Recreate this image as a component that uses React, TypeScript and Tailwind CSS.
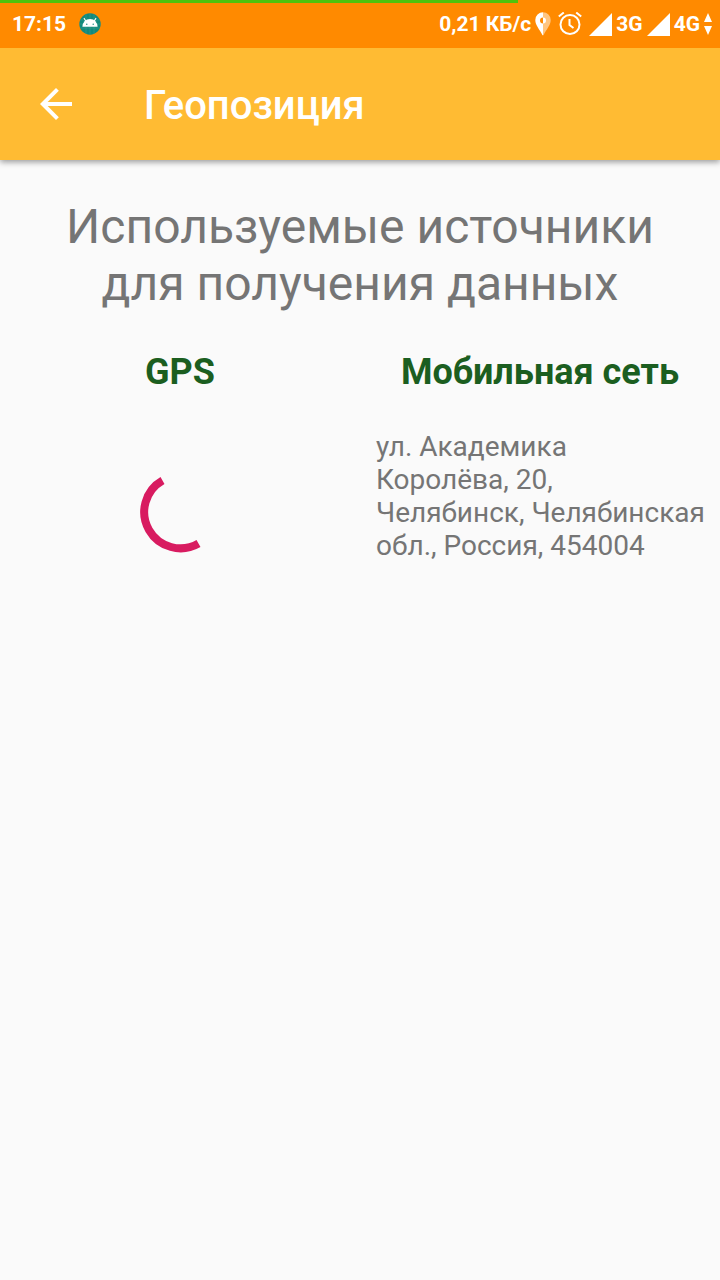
function AndroidBadge() {
  return (
    <svg viewBox="0 0 22 22" className="size-[22px]" aria-hidden="true">
      <circle cx="11" cy="11" r="10.7" fill="#12897b" />
      <path d="M7 1v20M11 0v22M15 1v20M1 7h20M0 11h22M1 15h20" stroke="#3f9f93" strokeWidth=".5" />
      <path d="M3.4 13.8a7.6 7.8 0 0 1 15.2 0z" fill="#fff" />
      <path d="M6.9 8.2 5.2 5.5M15.1 8.2 16.8 5.5" stroke="#fff" strokeWidth="1.2" strokeLinecap="round" />
      <circle cx="7.8" cy="11.2" r=".7" fill="#12897b" />
      <circle cx="14.2" cy="11.2" r=".7" fill="#12897b" />
    </svg>
  );
}

function PinIcon() {
  return (
    <svg viewBox="0 0 16 24" className="h-6 w-4" aria-hidden="true">
      <path d="M8 .3A7.700 7.700 0 0 1 15.700 8C15.700 13.500 11.500 17 8.500 23.300H8z" fill="#fff" fillOpacity=".5" />
      <path d="M8 .3A7.700 7.700 0 0 0 .3 8C.3 13.500 4.500 17 7.500 23.300H8z" fill="#fff" />
      <path d="M8 5.500a3 3 0 0 0 0 6z" fill="#ff8a00" />
      <path d="M8 5.500a3 3 0 0 1 0 6z" fill="#fff" />
    </svg>
  );
}

function AlarmIcon() {
  return (
    <svg viewBox="0 0 24 24" className="size-6" fill="none" stroke="#fff" strokeWidth="2" aria-hidden="true">
      <circle cx="12" cy="12.500" r="9.500" />
      <path d="M11.500 7v6l4 3M.8 4.500l5-4M23.200 4.500l-5-4" />
    </svg>
  );
}

function SignalIcon() {
  return (
    <svg viewBox="0 0 23 23" className="size-[23px]" fill="#fff" aria-hidden="true">
      <path d="M23 0v23H0z" />
    </svg>
  );
}

function StatusBar() {
  return (
    <div className="relative z-10 bg-[#ff8a00] text-[21px] leading-6 font-bold text-white">
      <div className="h-[3px] w-[72%] bg-[#4fc30c]" />
      <div className="flex h-[45px] items-center justify-between pr-2 pb-[3px] pl-3">
        <div className="flex items-center gap-[13px]">
          <span>17:15</span>
          <AndroidBadge />
        </div>
        <div className="flex items-center">
          <span className="mr-1">0,21 КБ/с</span>
          <PinIcon />
          <span className="mx-[7px]"><AlarmIcon /></span>
          <SignalIcon />
          <span className="mx-1">3G</span>
          <SignalIcon />
          <span className="mx-1">4G</span>
          <svg viewBox="0 0 8 22" className="h-[22px] w-2" fill="#fff" aria-hidden="true">
            <path d="M4 0l4 9H0zM4 22l4-9H0z" />
          </svg>
        </div>
      </div>
    </div>
  );
}

export default function App() {
  return (
    <div className="min-h-screen bg-[#fafafa] font-['Roboto',sans-serif] text-[#757575]">
      <StatusBar />
      <header className="flex h-28 items-center bg-[#ffbb33] pl-8 text-white shadow-[0_2px_6px_rgba(0,0,0,0.4)]">
        <button type="button" aria-label="Назад" className="mr-16 size-12">
          <svg viewBox="0 0 24 24" className="size-12" fill="#fff" aria-hidden="true">
            <path d="M20 11H7.830l5.590-5.590L12 4l-8 8 8 8 1.410-1.410L7.830 13H20v-2z" />
          </svg>
        </button>
        <h1 className="pt-1 text-[40px] leading-12 font-medium">Геопозиция</h1>
      </header>
      <main className="pt-[38px]">
        <h2 className="px-8 text-center text-[48px] leading-[57px]">
          Используемые источники для получения данных
        </h2>
        <div className="mt-[39px] grid grid-cols-2">
          <section>
            <h3 className="text-center text-[36px] leading-[42px] font-bold text-[#1b5e20]">GPS</h3>
            <div className="mt-[71px] flex justify-center" role="progressbar" aria-label="GPS">
              <svg viewBox="0 0 96 96" className="size-24" fill="none" aria-hidden="true">
                <path d="M30.500 16.500A36 36 0 0 0 66.500 79.500" stroke="#d81b60" strokeWidth="8" />
              </svg>
            </div>
          </section>
          <section>
            <h3 className="text-center text-[36px] leading-[42px] font-bold text-[#1b5e20]">Мобильная сеть</h3>
            <p className="mt-[37px] pr-[14px] pl-4 text-[28px] leading-[33px]">
              ул. Академика Королёва, 20, Челябинск, Челябинская обл., Россия, 454004
            </p>
          </section>
        </div>
      </main>
    </div>
  );
}
